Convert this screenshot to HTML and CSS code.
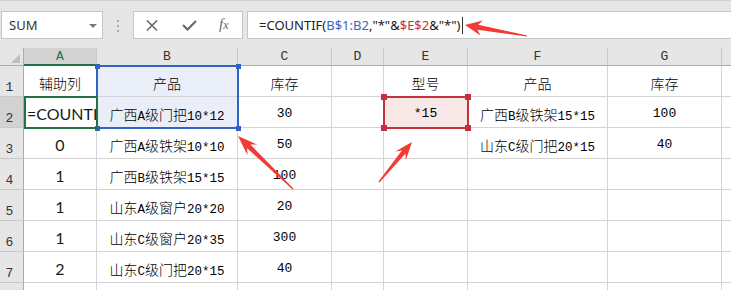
FILE: index.html
```html
<!DOCTYPE html>
<html>
<head>
<meta charset="utf-8">
<link rel="stylesheet" href="styles.css">
</head>
<body>
<div class="page">
  <div class="top">
    <div class="namebox"><span class="nm">SUM</span><span class="caret"></span></div>
    <div class="grip"><i></i><i></i><i></i></div>
    <div class="btns">
      <svg class="ic-x" width="12" height="11" viewBox="0 0 12 11"><path d="M1 0.5L11 10.5M11 0.5L1 10.5" stroke="#6b6b6b" stroke-width="1.6" fill="none"/></svg>
      <svg class="ic-ok" width="15" height="11" viewBox="0 0 15 11"><path d="M1 5L5.5 9.5L14 1" stroke="#6b6b6b" stroke-width="2.2" fill="none"/></svg>
      <span class="fx"><i>f</i><i class="fxx">x</i></span>
    </div>
    <div class="fbar"><span class="ftext">=COUNTIF(<span class="rb">B$1:B2</span>,"*"&amp;<span class="rr">$E$2</span>&amp;"*")</span><span class="cur"></span></div>
  </div>

  <div class="sheet">
    <div class="h corner"></div>
    <div class="h hsel">A</div><div class="h">B</div><div class="h">C</div><div class="h">D</div><div class="h">E</div><div class="h">F</div><div class="h">G</div><div class="h"></div>

    <div class="rh">1</div>
    <div class="c">辅助列</div><div class="c bl">产品</div><div class="c">库存</div><div class="c"></div><div class="c">型号</div><div class="c">产品</div><div class="c">库存</div><div class="c"></div>

    <div class="rh rsel">2</div>
    <div class="c cal fm"><span>=COUNTIF(B$1:B2,"*"&amp;$E$2&amp;"*")</span></div><div class="c bl"><span>广西<span class="l">A</span>级门把<span class="l">10*12</span></span></div><div class="c n">30</div><div class="c"></div><div class="c pk n">*15</div><div class="c"><span>广西<span class="l">B</span>级铁架<span class="l">15*15</span></span></div><div class="c n">100</div><div class="c"></div>

    <div class="rh">3</div>
    <div class="c cal">0</div><div class="c"><span>广西<span class="l">A</span>级铁架<span class="l">10*10</span></span></div><div class="c n">50</div><div class="c"></div><div class="c"></div><div class="c"><span>山东<span class="l">C</span>级门把<span class="l">20*15</span></span></div><div class="c n">40</div><div class="c"></div>

    <div class="rh">4</div>
    <div class="c cal">1</div><div class="c"><span>广西<span class="l">B</span>级铁架<span class="l">15*15</span></span></div><div class="c n">100</div><div class="c"></div><div class="c"></div><div class="c"></div><div class="c"></div><div class="c"></div>

    <div class="rh">5</div>
    <div class="c cal">1</div><div class="c"><span>山东<span class="l">A</span>级窗户<span class="l">20*20</span></span></div><div class="c n">20</div><div class="c"></div><div class="c"></div><div class="c"></div><div class="c"></div><div class="c"></div>

    <div class="rh">6</div>
    <div class="c cal">1</div><div class="c"><span>山东<span class="l">C</span>级窗户<span class="l">20*35</span></span></div><div class="c n">300</div><div class="c"></div><div class="c"></div><div class="c"></div><div class="c"></div><div class="c"></div>

    <div class="rh">7</div>
    <div class="c cal">2</div><div class="c"><span>山东<span class="l">C</span>级门把<span class="l">20*15</span></span></div><div class="c n">40</div><div class="c"></div><div class="c"></div><div class="c"></div><div class="c"></div><div class="c"></div>

    <div class="rh"></div>
    <div class="c"></div><div class="c"></div><div class="c"></div><div class="c"></div><div class="c"></div><div class="c"></div><div class="c"></div><div class="c"></div>

    <div class="box box-b"><i class="hd tl"></i><i class="hd tr"></i><i class="hd bl2"></i><i class="hd br"></i></div>
    <div class="box box-a"></div>
    <div class="box box-e"><i class="hd tl"></i><i class="hd tr"></i><i class="hd bl2"></i><i class="hd br"></i></div>
  </div>

  <svg class="arrows" width="731" height="290" viewBox="0 0 731 290">
    <polygon points="527.1,35.4 478.2,24.8 482.9,20.6 465,25 480.5,35.4 477.4,29.8 526.9,36.6"/>
    <polygon points="293.4,188.6 250.5,144.6 257.3,144.6 238,136 247.5,155.2 247.1,148.2 292.6,189.4"/>
    <polygon points="379.5,182.4 405.5,153.5 405.8,160.3 412,142 395.4,151.6 401.9,150.5 378.5,181.6"/>
  </svg>
</div>
</body>
</html>
```

FILE: styles.css
```css
body {
  margin: 0;
  background: #fff;
  font-family: "Noto Sans", sans-serif;
}

.page {
  position: relative;
  width: 731px;
  height: 290px;
  overflow: hidden;
}

/* ---------- formula bar ---------- */
.top {
  height: 48px;
  box-sizing: border-box;
  background: #e6e6e6;
  border-top: 1px solid #d2d2d2;
  display: flex;
  align-items: flex-start;
  padding-top: 10px;
}

.namebox {
  margin-left: 1px;
  width: 102px;
  height: 28px;
  box-sizing: border-box;
  border: 1px solid #c6c6c6;
  background: #fff;
  display: flex;
  align-items: center;
  padding-left: 7px;
  padding-right: 5px;
}

.nm {
  flex: 1;
  font-size: 13px;
  color: #333;
}

.caret {
  width: 0;
  height: 0;
  border-left: 4px solid transparent;
  border-right: 4px solid transparent;
  border-top: 4px solid #7a7a7a;
  margin-top: 1px;
}

.grip {
  width: 30px;
  display: flex;
  flex-direction: column;
  align-items: center;
  gap: 3px;
  padding-top: 9px;
}

.grip i {
  display: block;
  width: 2px;
  height: 2px;
  background: #aaaaaa;
}

.btns {
  width: 110px;
  height: 28px;
  box-sizing: border-box;
  border: 1px solid #c6c6c6;
  background: #fff;
  display: flex;
  align-items: center;
  padding-left: 12px;
}

.ic-x { margin-right: 24px; }
.ic-ok { margin-right: 22px; }

.fx {
  font-family: "Liberation Serif", serif;
  font-size: 15px;
  color: #6b6b6b;
  line-height: 1;
  margin-top: -2px;
}

.fx i { font-style: italic; }
.fxx { font-size: 12px; }

.fbar {
  margin-left: 4px;
  flex: 1;
  height: 28px;
  box-sizing: border-box;
  border: 1px solid #c6c6c6;
  border-right: none;
  background: #fff;
  display: flex;
  align-items: center;
  padding-left: 11px;
  font-size: 13px;
  color: #222;
  white-space: nowrap;
}

.rb { color: #3568c8; }
.rr { color: #cc3333; }

.cur {
  display: block;
  width: 1px;
  height: 17px;
  background: #333;
  margin-left: 2px;
}

/* ---------- sheet ---------- */
.sheet {
  position: relative;
  display: grid;
  grid-template-columns: 24px 73px 141px 94px 52px 84px 140px 114px 40px;
  grid-template-rows: 18px repeat(8, 31px);
}

.h {
  box-sizing: border-box;
  background: #e6e6e6;
  border-right: 1px solid #c8c8c8;
  border-bottom: 1px solid #ababab;
  display: flex;
  align-items: center;
  justify-content: center;
  font-family: "Liberation Mono", monospace;
  font-size: 13px;
  color: #333;
}

.hsel {
  background: #d2d2d2;
  color: #217346;
  border-bottom: 2px solid #217346;
}

.corner {
  position: relative;
  border-right: 1px solid #ababab;
}

.corner::after {
  content: "";
  position: absolute;
  right: 3px;
  bottom: 2px;
  width: 0;
  height: 0;
  border-left: 9px solid transparent;
  border-bottom: 9px solid #bdbdbd;
}

.rh {
  box-sizing: border-box;
  background: #e6e6e6;
  border-right: 1px solid #ababab;
  border-bottom: 1px solid #c8c8c8;
  display: flex;
  align-items: flex-end;
  justify-content: center;
  padding-bottom: 1px;
  padding-right: 4px;
  font-family: "Liberation Mono", monospace;
  font-size: 13px;
  color: #333;
}

.rsel { background: #d2d2d2; }

.c {
  box-sizing: border-box;
  border-right: 1px solid #d4d4d4;
  border-bottom: 1px solid #d4d4d4;
  display: flex;
  align-items: center;
  justify-content: center;
  padding-top: 3px;
  font-family: "Noto Sans CJK SC", sans-serif;
  font-weight: 300;
  font-size: 14px;
  color: #000;
  overflow: hidden;
  white-space: nowrap;
}

.c.n {
  font-family: "Liberation Mono", monospace;
  font-weight: 400;
  font-size: 13px;
}

.c.cal {
  font-family: Lato, "Liberation Sans", sans-serif;
  font-weight: 400;
  font-size: 16px;
  color: #1a1a1a;
}

.c.fm {
  justify-content: flex-start;
  padding-left: 3px;
}

.l {
  font-family: "Liberation Mono", monospace;
  font-weight: 400;
  font-size: 12.5px;
}

.bl { background: #e9eef8; }
.pk { background: #f8e7e7; }

/* selection outlines */
.box {
  position: absolute;
  box-sizing: border-box;
  border: 2px solid;
}

.box-b {
  left: 96px;
  top: 17px;
  width: 143px;
  height: 64px;
  border-color: #2f64c2;
  color: #2f64c2;
}

.box-a {
  left: 24px;
  top: 48px;
  width: 74px;
  height: 33px;
  border-color: #217346;
}

.box-e {
  left: 383px;
  top: 48px;
  width: 86px;
  height: 33px;
  border-color: #c4313c;
  color: #c4313c;
}

.hd {
  position: absolute;
  width: 5px;
  height: 5px;
  background: currentColor;
}

.box-e .hd {
  width: 6px;
  height: 6px;
}

.hd.tl { left: -3.5px; top: -3.5px; }
.hd.tr { right: -3.5px; top: -3.5px; }
.hd.bl2 { left: -3.5px; bottom: -3.5px; }
.hd.br { right: -3.5px; bottom: -3.5px; }

.box-e .hd.tl { left: -4px; top: -4px; }
.box-e .hd.tr { right: -4px; top: -4px; }
.box-e .hd.bl2 { left: -4px; bottom: -4px; }
.box-e .hd.br { right: -4px; bottom: -4px; }

/* annotation arrows */
.arrows {
  position: absolute;
  left: 0;
  top: 0;
  pointer-events: none;
}

.arrows polygon {
  fill: #f23b36;
}
```
